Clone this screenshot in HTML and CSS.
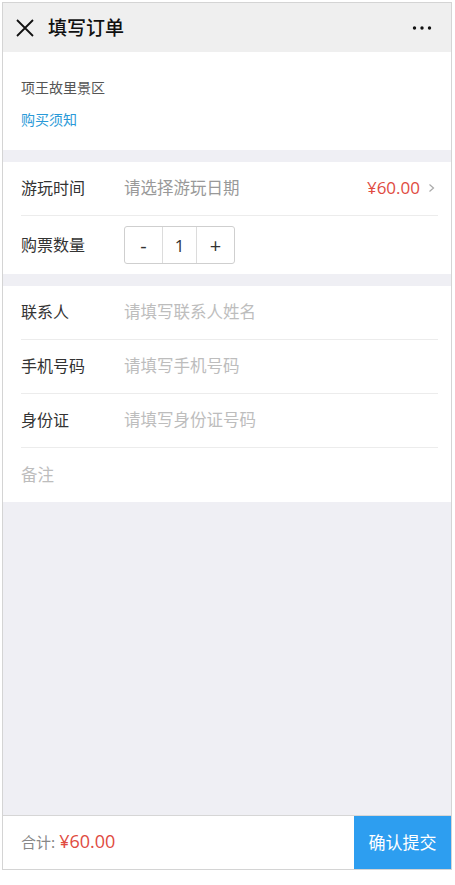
FILE: index.html
```html
<!DOCTYPE html>
<html lang="zh">
<head>
<meta charset="utf-8">
<title>填写订单</title>
<link rel="stylesheet" href="styles.css">
</head>
<body>
<div class="phone">
  <header class="topbar">
    <svg class="close" width="18" height="18" viewBox="0 0 18 18"><path d="M1 1L17 17M17 1L1 17" stroke="#111" stroke-width="1.8" fill="none"/></svg>
    <h1 class="title">填写订单</h1>
    <svg class="more" width="20" height="6" viewBox="0 0 20 6"><circle cx="2.5" cy="3" r="1.7" fill="#111"/><circle cx="10" cy="3" r="1.7" fill="#111"/><circle cx="17.5" cy="3" r="1.7" fill="#111"/></svg>
  </header>
  <main class="content">
    <section class="card intro">
      <div class="spot">项王故里景区</div>
      <a class="notice">购买须知</a>
    </section>
    <section class="card">
      <div class="row">
        <span class="label">游玩时间</span>
        <span class="value dark">请选择游玩日期</span>
        <span class="price">¥60.00</span>
        <svg class="chev" width="7" height="10" viewBox="0 0 7 10"><path d="M1.5 1.5L5.5 5L1.5 8.5" stroke="#aaa" stroke-width="1.2" fill="none"/></svg>
      </div>
      <div class="row row-step">
        <span class="label">购票数量</span>
        <div class="stepper">
          <span class="btn">-</span>
          <span class="num">1</span>
          <span class="btn">+</span>
        </div>
      </div>
    </section>
    <section class="card">
      <div class="row"><span class="label">联系人</span><span class="value">请填写联系人姓名</span></div>
      <div class="row"><span class="label">手机号码</span><span class="value">请填写手机号码</span></div>
      <div class="row"><span class="label">身份证</span><span class="value">请填写身份证号码</span></div>
      <div class="row"><span class="value">备注</span></div>
    </section>
  </main>
  <footer class="bottom">
    <div class="total"><span class="tlabel">合计:</span><span class="tprice">¥60.00</span></div>
    <div class="submit">确认提交</div>
  </footer>
</div>
</body>
</html>
```

FILE: styles.css
```css
* { box-sizing: border-box; }
html, body { margin: 0; padding: 0; background: #fff; }
body {
  font-family: "Noto Sans CJK SC", "Noto Sans", sans-serif;
  color: #333;
}
.phone {
  margin: 2px 0 0 2px;
  width: 450px;
  height: 868px;
  border: 1px solid #d4d4d4;
  display: flex;
  flex-direction: column;
  background: #efeff4;
  overflow: hidden;
}
.topbar {
  height: 49px;
  flex: none;
  background: #efefef;
  display: flex;
  align-items: center;
  padding: 0 19px 0 13px;
}
.close { flex: none; }
.title {
  margin: 0 0 0 14px;
  font-size: 19px;
  font-weight: 500;
  color: #111;
  flex: 1;
  line-height: 24px;
  padding-bottom: 2px;
}
.more { flex: none; }
.content {
  flex: 1;
  display: flex;
  flex-direction: column;
  gap: 12px;
}
.card { background: #fff; }
.intro {
  padding: 25px 18px 21px;
  font-size: 14px;
  line-height: 20px;
}
.spot { color: #555; }
.notice {
  display: block;
  margin-top: 12px;
  color: #2a9ad8;
}
.row {
  height: 54px;
  margin: 0 13px 0 18px;
  display: flex;
  align-items: center;
  border-bottom: 1px solid #ececec;
  font-size: 16px;
  padding-bottom: 3px;
}
.row:last-child { border-bottom: none; }
.row-step { height: 58px; padding-bottom: 0; }
.label {
  width: 103px;
  flex: none;
  color: #333;
}
.row-step .label { padding-bottom: 3px; }
.value { color: #bdbdbd; flex: 1; font-size: 16.5px; }
.value.dark { color: #999; }
.price {
  color: #e04b3f;
  font-family: "Open Sans", "Noto Sans", sans-serif;
  font-size: 17px;
  margin-right: 8px;
}
.chev { flex: none; margin-right: 3px; margin-top: 2px; }
.stepper {
  display: flex;
  height: 38px;
  border: 1px solid #cfcfcf;
  border-radius: 3px;
}
.stepper > span {
  display: flex;
  align-items: center;
  justify-content: center;
  color: #333;
  font-family: "Open Sans", "Noto Sans", sans-serif;
}
.btn { width: 37px; font-size: 20px; }
.num {
  width: 35px;
  font-size: 17px;
  border-left: 1px solid #dcdcdc;
  border-right: 1px solid #dcdcdc;
}
.bottom {
  flex: none;
  height: 54px;
  background: #fff;
  border-top: 1px solid #d6d6d6;
  display: flex;
  align-items: stretch;
}
.total {
  flex: 1;
  display: flex;
  align-items: center;
  padding-left: 18px;
  padding-bottom: 3px;
}
.tlabel { color: #888; font-size: 15px; }
.tprice {
  color: #e04b3f;
  font-family: "Open Sans", "Noto Sans", sans-serif;
  font-size: 18px;
  margin-left: 4px;
}
.submit {
  width: 97px;
  background: #2d9ef0;
  color: #fff;
  font-size: 17px;
  display: flex;
  align-items: center;
  justify-content: center;
  padding-bottom: 3px;
}
```
